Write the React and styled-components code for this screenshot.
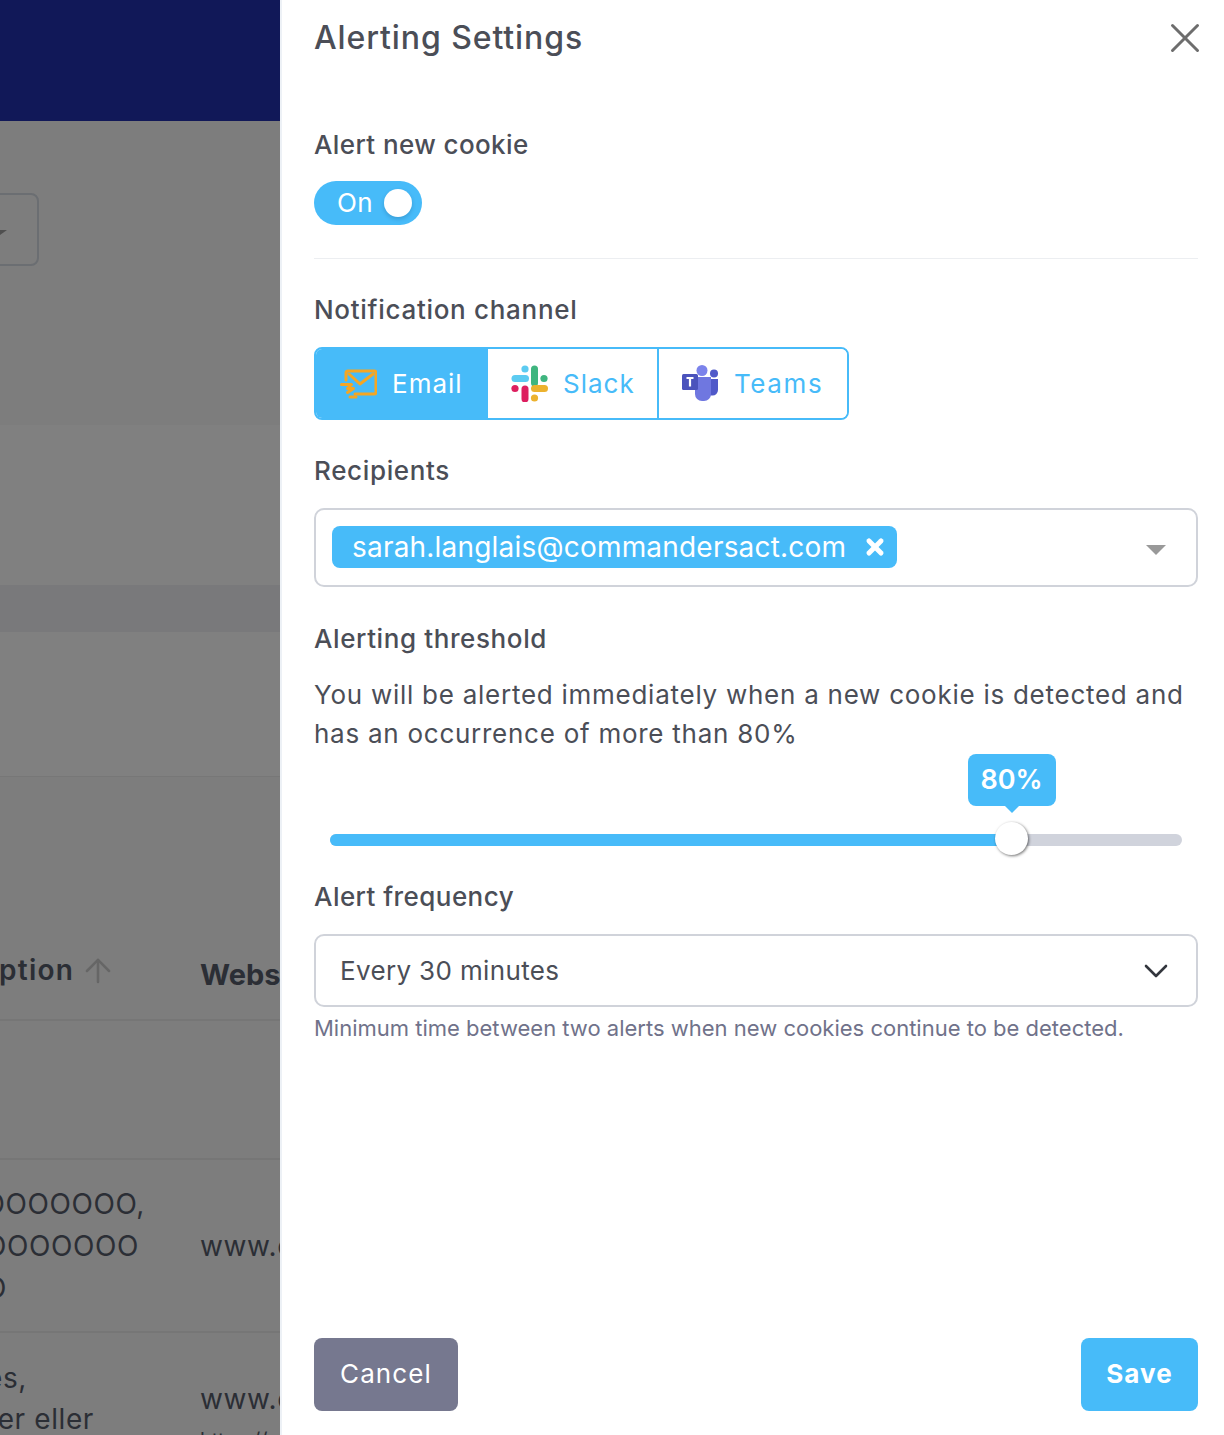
import React from 'react'
import styled, { createGlobalStyle } from 'styled-components'
import { ArrowUp, ChevronDown, X } from 'lucide-react'

const blue = '#47bbf9'
const ink = '#4b4e57'
const font = '"Inter", "Liberation Sans", sans-serif'

const Global = createGlobalStyle`
  html, body { margin: 0; padding: 0; overflow: hidden; background: #fff; }
  * { box-sizing: border-box; }
  body { font-family: ${font}; }
`

const Page = styled.div`
  display: flex;
  width: 1224px;
  height: 1435px;
  overflow: hidden;
`

/* dimmed page behind the drawer */
const Behind = styled.div`
  width: 280px;
  flex: none;
  overflow: hidden;
  display: flex;
  flex-direction: column;
  background: #7f7f7f;
  color: #2b2e35;
`
const NavBar = styled.div`
  height: 121px;
  flex: none;
  background: #111858;
`
const Band = styled.div`
  flex: none;
  height: ${p => p.$h}px;
  background: ${p => p.$bg || '#808080'};
  border-bottom: ${p => (p.$line ? '1px solid #777' : 'none')};
`
const FilterBand = styled(Band)`
  background: #7d7d7d;
  padding-top: 72px;
`
const DimSelect = styled.div`
  width: 59px;
  height: 73px;
  margin-left: -20px;
  border: 2px solid #6b6e72;
  border-radius: 8px;
  display: flex;
  align-items: center;
  padding-left: 5px;
`
const DimCaret = styled.i`
  width: 0;
  height: 0;
  border-left: 10px solid transparent;
  border-right: 10px solid transparent;
  border-top: 7px solid #4f4f4f;
  margin-top: 7px;
`
const HeadRow = styled.div`
  flex: none;
  height: 244px;
  padding-bottom: 28px;
  display: flex;
  align-items: flex-end;
  background: #7d7d7d;
  border-bottom: 2px solid #767676;
`
const Row = styled.div`
  flex: none;
  display: flex;
  height: ${p => p.$h}px;
  align-items: ${p => (p.$top ? 'flex-start' : 'center')};
  padding-top: ${p => p.$pad || 0}px;
  background: #7d7d7d;
  border-bottom: ${p => (p.$line ? '2px solid #767676' : 'none')};
`
const DescCell = styled.div`
  width: 200px;
  flex: none;
  display: flex;
  flex-direction: ${p => (p.$inline ? 'row' : 'column')};
  align-items: ${p => (p.$inline ? 'center' : 'flex-start')};
`
const CropLine = styled.div`
  width: ${p => p.$end}px;
  height: ${p => p.$lh || 42}px;
  line-height: ${p => p.$lh || 42}px;
  display: flex;
  justify-content: flex-end;
  white-space: nowrap;
  font-size: 28px;
  letter-spacing: 0.6px;
`
const HeadLine = styled(CropLine)`
  font-weight: 600;
  letter-spacing: 1.2px;
`
const SortArrow = styled(ArrowUp)`
  margin-left: 5px;
  margin-top: 2px;
  color: #666;
`
const SiteCell = styled.div`
  white-space: nowrap;
  font-size: 28px;
  line-height: 42px;
  letter-spacing: 0.6px;
`
const SiteHead = styled.div`
  white-space: nowrap;
  font-size: 29px;
  font-weight: 700;
  margin-bottom: -1px;
`
const SiteSub = styled.div`
  white-space: nowrap;
  font-size: 20px;
  line-height: 16px;
  padding-top: 12px;
`
const SiteStack = styled.div`
  padding-top: ${p => p.$pad}px;
`

/* drawer */
const Drawer = styled.aside`
  flex: 1;
  display: flex;
  flex-direction: column;
  padding: 0 26px 24px 32px;
  background: #fff;
  border-left: 2px solid #edf1f6;
  color: ${ink};
`
const Header = styled.header`
  height: 75px;
  display: flex;
  justify-content: space-between;
  align-items: center;
`
const Title = styled.h1`
  margin: 0;
  font-size: 32px;
  font-weight: 500;
  letter-spacing: 0.9px;
`
const CloseBtn = styled.button`
  border: 0;
  background: none;
  padding: 0;
  margin-right: -12px;
  display: flex;
  color: #6d6d6d;
`
const Label = styled.div`
  font-size: 26px;
  line-height: 32px;
  font-weight: 500;
  letter-spacing: ${p => p.$ls || 0.6}px;
  margin-top: ${p => p.$mt}px;
`
const Toggle = styled.div`
  width: 108px;
  height: 44px;
  margin-top: 20px;
  border-radius: 22px;
  background: ${blue};
  color: #fff;
  display: flex;
  align-items: center;
  justify-content: space-between;
  padding: 0 10px 2px 23px;
  font-size: 26px;
  letter-spacing: 0.3px;
`
const Knob = styled.span`
  width: 28px;
  height: 28px;
  margin-bottom: -2px;
  border-radius: 50%;
  background: #fff;
  box-shadow: 0 2px 4px rgba(0, 40, 80, 0.2);
`
const Divider = styled.hr`
  border: 0;
  height: 1px;
  margin: 33px 0 0;
  background: #eceef1;
`
const Segments = styled.div`
  display: flex;
  align-self: flex-start;
  height: 73px;
  margin-top: 21px;
  border: 2px solid ${blue};
  border-radius: 8px;
  overflow: hidden;
`
const Segment = styled.div`
  width: ${p => p.$w}px;
  display: flex;
  align-items: center;
  gap: ${p => p.$gap}px;
  padding-left: ${p => p.$pl}px;
  font-size: 26px;
  letter-spacing: ${p => p.$ls || 1}px;
  background: ${p => (p.$active ? blue : '#fff')};
  color: ${p => (p.$active ? '#fff' : blue)};
  border-right: ${p => (p.$last ? '0' : `2px solid ${blue}`)};
`
const SelectBox = styled.div`
  height: ${p => p.$h}px;
  margin-top: ${p => p.$mt}px;
  border: 2px solid #d0d3da;
  border-radius: 10px;
  display: flex;
  align-items: center;
  justify-content: space-between;
  padding: ${p => p.$pad};
`
const Chip = styled.div`
  height: 42px;
  width: 565px;
  margin-top: -1px;
  padding: 0 10px 0 20px;
  border-radius: 8px;
  background: ${blue};
  color: #fff;
  display: flex;
  align-items: center;
  justify-content: space-between;
  font-size: 28px;
  letter-spacing: 0.2px;
`
const ChipX = styled(X)`
  stroke-width: 5;
  flex: none;
`
const Caret = styled.i`
  width: 0;
  height: 0;
  margin-top: 5px;
  border-left: 10px solid transparent;
  border-right: 10px solid transparent;
  border-top: 10px solid #999;
`
const Para = styled.p`
  margin: 20px 0 0;
  font-size: 26px;
  line-height: 39px;
  letter-spacing: 0.74px;
`
const SliderWrap = styled.div`
  position: relative;
  height: 12px;
  margin: 81px 16px 0;
  border-radius: 6px;
  background: #d0d3dc;
`
const SliderFill = styled.div`
  height: 100%;
  border-radius: 6px;
  background: ${blue};
`
const Thumb = styled.span`
  position: absolute;
  top: -12px;
  width: 33px;
  height: 33px;
  margin-left: -17px;
  border-radius: 50%;
  background: #fff;
  box-shadow: 1px 1px 3px rgba(0, 0, 0, 0.55);
`
const Bubble = styled.div`
  position: absolute;
  top: -80px;
  width: 88px;
  height: 52px;
  margin-left: -44px;
  padding-bottom: 2px;
  border-radius: 8px;
  background: ${blue};
  color: #fff;
  font-size: 27px;
  font-weight: 600;
  display: flex;
  align-items: center;
  justify-content: center;
  &:after {
    content: '';
    position: absolute;
    left: 37px;
    bottom: -7px;
    border-left: 7px solid transparent;
    border-right: 7px solid transparent;
    border-top: 7px solid ${blue};
  }
`
const SelectText = styled.span`
  font-size: 26px;
  letter-spacing: 0.35px;
`
const Help = styled.div`
  margin-top: 6px;
  font-size: 22px;
  line-height: 30px;
  color: #70728a;
`
const Footer = styled.footer`
  margin-top: auto;
  display: flex;
  justify-content: space-between;
`
const Button = styled.button`
  height: 73px;
  width: ${p => p.$w}px;
  padding: 0 0 2px;
  border: 0;
  border-radius: 8px;
  font-family: inherit;
  font-size: 26px;
  letter-spacing: 1.1px;
  color: #fff;
  font-weight: ${p => (p.$primary ? 700 : 400)};
  background: ${p => (p.$primary ? blue : '#76788f')};
`

const EmailIcon = () => (
  <svg width="37" height="32" viewBox="0 0 37 32" fill="none" stroke="#f5a623" strokeWidth="3" strokeLinecap="round" strokeLinejoin="round">
    <path d="M6 12V5a2 2 0 0 1 2-2h26a2 2 0 0 1 2 2v19a2 2 0 0 1-2 2H15" />
    <path d="M9 6l11 10L33 6" />
    <path d="M1.5 16.5h10l-4 4h6l-6 4" />
    <path d="M10 29h6" />
  </svg>
)

const SlackIcon = () => (
  <svg width="37" height="37" viewBox="0 0 37 37" fill="none" strokeLinecap="round" strokeWidth="7">
    <path d="M4 13.5h10.5" stroke="#5ccbf1" />
    <circle cx="14" cy="4" r="3.6" fill="#5ccbf1" />
    <path d="M23.5 4v14" stroke="#3fb57f" />
    <circle cx="33" cy="13.5" r="3.6" fill="#3fb57f" />
    <path d="M14 24v10" stroke="#dd1f5f" />
    <circle cx="4" cy="23.5" r="3.6" fill="#dd1f5f" />
    <path d="M23.5 23.5h10" stroke="#ecb22e" />
    <circle cx="23.5" cy="33" r="3.6" fill="#ecb22e" />
  </svg>
)

const TeamsIcon = () => (
  <svg width="37" height="37" viewBox="0 0 37 37">
    <circle cx="32" cy="8.5" r="4" fill="#5059c9" />
    <path d="M26 14h10v11a5.5 5.5 0 0 1-5.5 5.5H26z" fill="#5059c9" />
    <circle cx="20" cy="5.5" r="5.5" fill="#7b83eb" />
    <path d="M13 12h16v17a7 7 0 0 1-7 7h-2a7 7 0 0 1-7-7z" fill="#6f77e0" />
    <rect x="0" y="9" width="16" height="16" rx="1.5" fill="#4b53bc" />
    <path d="M4.5 13h7M8 13v8.5" stroke="#fff" strokeWidth="2.2" fill="none" />
  </svg>
)

function PageBehind() {
  return (
    <Behind>
      <NavBar />
      <FilterBand $h={304}>
        <DimSelect>
          <DimCaret />
        </DimSelect>
      </FilterBand>
      <Band $h={160} />
      <Band $h={47} $bg="#79797b" />
      <Band $h={145} $line />
      <HeadRow>
        <DescCell $inline>
          <HeadLine $end={74}>Description</HeadLine>
          <SortArrow size={38} strokeWidth={2.5} absoluteStrokeWidth />
        </DescCell>
        <SiteHead>Website</SiteHead>
      </HeadRow>
      <Row $h={139} $line />
      <Row $h={173} $line>
        <DescCell>
          <CropLine $end={145}>OOOOOOOOOOOOO,</CropLine>
          <CropLine $end={139}>OOOOOOOOOOOOO</CropLine>
          <CropLine $end={7}>O</CropLine>
        </DescCell>
        <SiteCell>www.commandersact.com</SiteCell>
      </Row>
      <Row $h={103} $top $pad={25}>
        <DescCell>
          <CropLine $end={27} $lh={41}>cookies,</CropLine>
          <CropLine $end={94} $lh={41}>kontakter eller</CropLine>
        </DescCell>
        <SiteStack $pad={20}>
          <SiteCell>www.commandersact.com</SiteCell>
          <SiteSub>https://www.commandersact.com</SiteSub>
        </SiteStack>
      </Row>
    </Behind>
  )
}

export default function App() {
  return (
    <Page>
      <Global />
      <PageBehind />
      <Drawer>
        <Header>
          <Title>Alerting Settings</Title>
          <CloseBtn aria-label="Close">
            <X size={50} strokeWidth={3} absoluteStrokeWidth />
          </CloseBtn>
        </Header>

        <Label $mt={54} $ls={0.4}>Alert new cookie</Label>
        <Toggle>
          On
          <Knob />
        </Toggle>
        <Divider />

        <Label $mt={35} $ls={0.7}>Notification channel</Label>
        <Segments>
          <Segment $active $w={172} $pl={24} $gap={15}>
            <EmailIcon />
            Email
          </Segment>
          <Segment $w={171} $pl={23} $gap={15}>
            <SlackIcon />
            Slack
          </Segment>
          <Segment $w={188} $pl={23} $gap={15} $ls={1.6} $last>
            <TeamsIcon />
            Teams
          </Segment>
        </Segments>

        <Label $mt={35} $ls={0.65}>Recipients</Label>
        <SelectBox $h={79} $mt={21} $pad="0 30px 0 16px">
          <Chip>
            sarah.langlais@commandersact.com
            <ChipX size={24} />
          </Chip>
          <Caret />
        </SelectBox>

        <Label $mt={36}>Alerting threshold</Label>
        <Para>
          You will be alerted immediately when a new cookie is detected and has an occurrence of more than 80%
        </Para>
        <SliderWrap>
          <SliderFill style={{ width: '80%' }} />
          <Bubble style={{ left: '80%' }}>80%</Bubble>
          <Thumb style={{ left: '80%' }} />
        </SliderWrap>

        <Label $mt={35} $ls={0.45}>Alert frequency</Label>
        <SelectBox $h={73} $mt={21} $pad="0 20px 0 24px">
          <SelectText>Every 30 minutes</SelectText>
          <ChevronDown size={40} strokeWidth={2.6} absoluteStrokeWidth color="#33363d" />
        </SelectBox>
        <Help>Minimum time between two alerts when new cookies continue to be detected.</Help>

        <Footer>
          <Button $w={144}>Cancel</Button>
          <Button $w={117} $primary>
            Save
          </Button>
        </Footer>
      </Drawer>
    </Page>
  )
}
